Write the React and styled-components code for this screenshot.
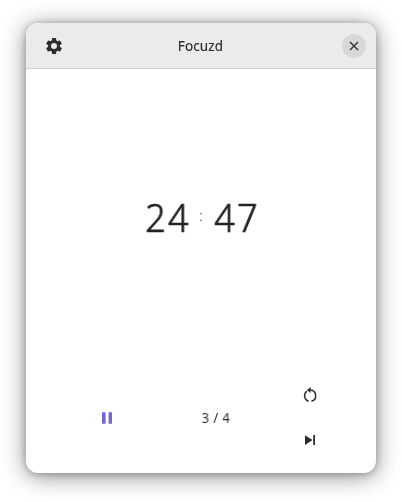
import React from 'react';
import styled, { createGlobalStyle } from 'styled-components';

const GlobalStyle = createGlobalStyle`
  * { box-sizing: border-box; }
  body {
    margin: 0;
    background: #fff;
    color: #2d2d2d;
    font-family: "Noto Sans", "Open Sans", sans-serif;
    overflow: hidden;
  }
`;

const Desktop = styled.main`
  height: 502px;
  padding: 23px 26px 29px;
`;

const Window = styled.section`
  display: flex;
  flex-direction: column;
  width: 350px;
  height: 450px;
  border-radius: 12px;
  overflow: hidden;
  background: #fff;
  box-shadow: 0 3px 23px rgba(0, 0, 0, 0.46), 0 1px 7px rgba(0, 0, 0, 0.24);
`;

const HeaderBar = styled.header`
  display: grid;
  grid-template-columns: 36px 1fr 24px;
  align-items: center;
  height: 46px;
  padding: 0 10px;
  background: #ebebeb;
  border-bottom: 1px solid #cfcfcf;
`;

const Title = styled.h1`
  margin: 0 13px 0 0;
  font-size: 13.5px;
  font-weight: 400;
  letter-spacing: 0.15px;
  line-height: 20px;
  text-align: center;
  -webkit-text-stroke: 0.15px currentColor;
  will-change: transform;
`;

const IconButton = styled.button`
  display: flex;
  align-items: center;
  justify-content: center;
  justify-self: center;
  width: ${({ $size }) => $size}px;
  height: ${({ $size }) => $size}px;
  padding: 0;
  border: 0;
  border-radius: 50%;
  color: ${({ $color }) => $color || '#2d2d2d'};
  background: ${({ $fill }) => $fill || 'transparent'};

  svg { display: block; }
`;

const Clock = styled.div`
  display: grid;
  grid-template-columns: 45px 24px 45px;
  justify-content: center;
  margin-top: 120px;
  height: 56px;
  line-height: 55px;
  text-align: center;
`;

const Digits = styled.span`
  justify-self: center;
  padding-left: 2.5px;
  color: #242424;
  font-size: 39px;
  font-weight: 300;
  letter-spacing: 2.2px;
  -webkit-text-stroke: 0.7px currentColor;
  transform: scaleX(0.93);
  will-change: transform;
`;

const Separator = styled.span`
  margin-top: -1px;
  font-size: 15px;
  font-weight: 300;
  color: #333;
  will-change: transform;
`;

const Controls = styled.footer`
  display: grid;
  grid-template-columns: 110px 108px 80px;
  align-items: center;
  justify-items: center;
  height: 88px;
  margin: auto 26px 11px;
`;

const Rounds = styled.span`
  color: #303030;
  font-size: 13.5px;
  font-weight: 400;
  line-height: 20px;
  word-spacing: 1px;
  transform: scaleX(0.95);
  will-change: transform;
`;

const ActionStack = styled.div`
  display: grid;
  row-gap: 12px;
`;

const GearIcon = () => (
  <svg width="20" height="20" viewBox="0 0 24 24" fill="currentColor">
    <path d="M19.14 12.94c.04-.3.06-.61.06-.94s-.02-.64-.07-.94l2.03-1.58a.49.49 0 0 0 .12-.61l-1.92-3.32a.49.49 0 0 0-.59-.22l-2.39.96a7 7 0 0 0-1.62-.94l-.36-2.54a.48.48 0 0 0-.48-.41h-3.84a.48.48 0 0 0-.47.41l-.36 2.54a7 7 0 0 0-1.62.94l-2.39-.96a.48.48 0 0 0-.59.22L2.74 8.87a.48.48 0 0 0 .12.61l2.03 1.58a6 6 0 0 0 0 1.88l-2.03 1.58a.49.49 0 0 0-.12.61l1.92 3.32c.12.22.37.29.59.22l2.39-.96c.5.38 1.03.7 1.62.94l.36 2.54c.05.24.24.41.48.41h3.84c.24 0 .44-.17.47-.41l.36-2.54a7 7 0 0 0 1.62-.94l2.39.96c.22.08.47 0 .59-.22l1.92-3.32a.48.48 0 0 0-.12-.61ZM12 15.6a3.6 3.6 0 1 1 0-7.2 3.6 3.6 0 0 1 0 7.2Z" />
  </svg>
);

const CloseIcon = () => (
  <svg width="10" height="10" viewBox="0 0 10 10" stroke="currentColor" strokeWidth="1.3">
    <path d="M1 1l8 8M9 1L1 9" />
  </svg>
);

const PauseIcon = () => (
  <svg width="16" height="16" viewBox="0 0 16 16" fill="currentColor">
    <path d="M3 2.2h3.6v11.6H3zM9.6 2.2h3.4v11.6H9.6z" />
  </svg>
);

const RestartIcon = () => (
  <svg width="16" height="18" viewBox="0 0 16 18" fill="none" stroke="currentColor" strokeWidth="1.5">
    <path d="M8.4 3.1a5.7 5.7 0 0 1 1 11.2M5 4.2a5.7 5.7 0 0 0 1.6 10.1" />
    <path d="M8.6 0v6.1L4.9 3.1z" fill="currentColor" stroke="none" />
  </svg>
);

const SkipIcon = () => (
  <svg width="16" height="16" viewBox="0 0 16 16" fill="currentColor">
    <path d="M3 3.2v9.8L10.6 8.1zM11.2 3.1h1.8V13h-1.8z" />
  </svg>
);

export default function App() {
  return (
    <>
      <GlobalStyle />
      <Desktop>
        <Window>
          <HeaderBar>
            <IconButton $size={34} aria-label="Settings"><GearIcon /></IconButton>
            <Title>Focuzd</Title>
            <IconButton $size={24} $fill="#d8d8d8" aria-label="Close"><CloseIcon /></IconButton>
          </HeaderBar>
          <Clock role="timer">
            <Digits>24</Digits>
            <Separator>:</Separator>
            <Digits>47</Digits>
          </Clock>
          <Controls>
            <IconButton $size={32} $color="#7764d8" aria-label="Pause"><PauseIcon /></IconButton>
            <Rounds>3 / 4</Rounds>
            <ActionStack>
              <IconButton $size={32} aria-label="Restart"><RestartIcon /></IconButton>
              <IconButton $size={32} aria-label="Skip"><SkipIcon /></IconButton>
            </ActionStack>
          </Controls>
        </Window>
      </Desktop>
    </>
  );
}
